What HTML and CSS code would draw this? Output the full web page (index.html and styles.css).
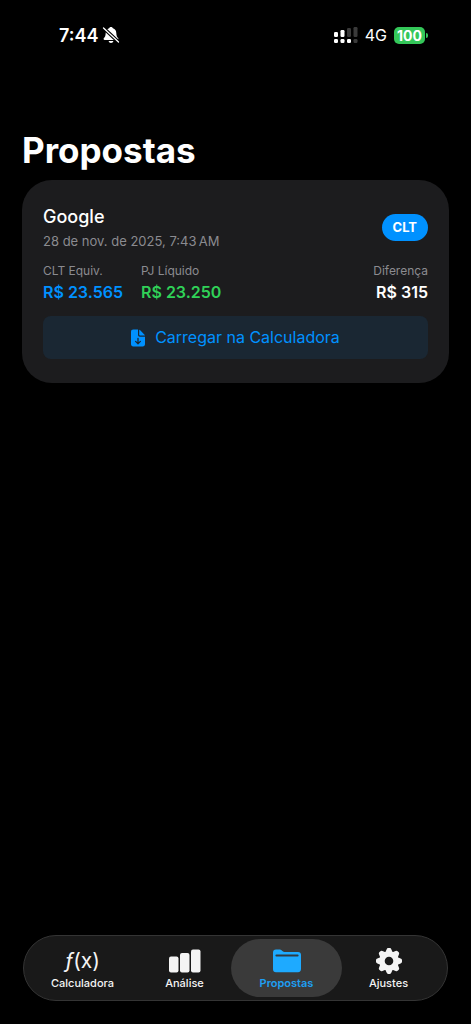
FILE: index.html
```html
<!DOCTYPE html>
<html lang="pt-BR">
<head>
<meta charset="utf-8">
<meta name="viewport" content="width=device-width, initial-scale=1">
<title>Propostas</title>
<link rel="stylesheet" href="styles.css">
</head>
<body>
<header class="status">
  <div class="status-time">
    <span>7:44</span>
    <svg class="bell" viewBox="0 0 18 18" width="18" height="18" aria-hidden="true">
      <path fill="#fff" d="M9 1c1 0 1.700.6 1.900 1.300 2.200.7 3.300 2.300 3.400 4.600.1 2.900.7 4 1.800 5.100.7.800.3 2-.8 2H2.700c-1.100 0-1.500-1.200-.8-2C3 10.900 3.600 9.800 3.700 6.900c.1-2.300 1.200-3.900 3.400-4.600C7.300 1.600 8 1 9 1zM6.600 15h4.800c-.2 1.300-1.200 2-2.400 2s-2.200-.7-2.400-2z"/>
      <path stroke="#000" stroke-width="3.600" d="M1.500 2l15 14"/>
      <path stroke="#fff" stroke-width="1.300" stroke-linecap="round" d="M1.500 2l15 14"/>
    </svg>
  </div>
  <div class="status-right">
    <svg viewBox="0 0 24 17" width="24" height="17" aria-hidden="true">
      <g fill="#fff">
        <rect x="0" y="5" width="4" height="5" rx="1.200"/><rect x="6.500" y="3" width="4" height="7" rx="1.200"/>
        <rect x="0" y="12" width="4" height="4" rx="1.200"/><rect x="6.500" y="12" width="4" height="4" rx="1.200"/><rect x="13" y="12" width="4" height="4" rx="1.200"/>
      </g>
      <g fill="#3a3a3a"><rect x="13" y="1" width="4" height="9" rx="1.200"/><rect x="19.500" y="0" width="4" height="10" rx="1.200"/><rect x="19.500" y="12" width="4" height="4" rx="1.200"/></g>
    </svg>
    <span class="network">4G</span>
    <span class="battery"><span class="battery-level">100</span><span class="battery-tip"></span></span>
  </div>
</header>
<main class="content">
  <h1 class="title">Propostas</h1>
  <article class="card">
    <div class="card-head">
      <div>
        <h2 class="name">Google</h2>
        <p class="date">28 de nov. de 2025, 7:43&#8239;AM</p>
      </div>
      <span class="badge">CLT</span>
    </div>
    <dl class="values">
      <div><dt>CLT Equiv.</dt><dd class="blue">R$ 23.565</dd></div>
      <div><dt>PJ Líquido</dt><dd class="green">R$ 23.250</dd></div>
      <div class="difference"><dt>Diferença</dt><dd>R$ 315</dd></div>
    </dl>
    <button class="load" type="button">
      <svg viewBox="0 0 14 18" width="14" height="18" aria-hidden="true">
        <path fill="currentColor" d="M2.400.5H7v5.300C7 7 7.700 7.700 8.900 7.700H14v7.400c0 1.600-.8 2.400-2.400 2.400H2.400C.8 17.500 0 16.700 0 15.100V2.900C0 1.300.8.500 2.400.5zM8.200.7c.4.1.7.3 1 .6l4.100 4.200c.3.3.5.600.6 1H9c-.5 0-.8-.3-.8-.8z"/>
        <path fill="none" stroke="#1a2733" stroke-width="1.300" stroke-linecap="round" stroke-linejoin="round" d="M7 9.300v5.200M4.600 12.400L7 14.700l2.400-2.300"/>
      </svg>
      Carregar na Calculadora
    </button>
  </article>
</main>
<nav class="tabs">
  <a class="tab" href="#calculadora">
    <span class="tab-icon function" aria-hidden="true"><i>ƒ</i>(x)</span>
    Calculadora
  </a>
  <a class="tab" href="#analise">
    <span class="tab-icon"><svg viewBox="0 0 32 24" width="32" height="24" fill="currentColor" aria-hidden="true">
      <rect x="0" y="7.500" width="9.500" height="16" rx="2"/><rect x="11" y="4" width="9.500" height="19.500" rx="2"/><rect x="22" y=".5" width="9.500" height="23" rx="2"/>
    </svg></span>
    Análise
  </a>
  <a class="tab active" href="#propostas" aria-current="page">
    <span class="tab-icon"><svg viewBox="0 0 28 24" width="28" height="24" aria-hidden="true">
      <path fill="#1eaaff" d="M0 3.500C0 1.500 1 .5 3 .5h3.200c1.200 0 1.800.2 2.600.9l.9.800c.6.500 1 .7 1.900.7H25c2 0 3 1 3 3v14.200c0 2-1 3.100-3 3.100H3c-2 0-3-1-3-3z"/>
      <rect x="2.400" y="5.600" width="23.200" height="2" rx="1" fill="#303a42"/>
    </svg></span>
    Propostas
  </a>
  <a class="tab" href="#ajustes">
    <span class="tab-icon"><svg viewBox="-13 -13 26 26" width="26" height="26" fill="currentColor" aria-hidden="true">
      <defs><path id="tooth" d="M-4.200-7.500L-2.400-11.600Q-2-13-.8-13H.8Q2-13 2.400-11.600L4.200-7.500z"/></defs>
      <use href="#tooth"/><use href="#tooth" transform="rotate(45)"/><use href="#tooth" transform="rotate(90)"/><use href="#tooth" transform="rotate(135)"/>
      <use href="#tooth" transform="rotate(180)"/><use href="#tooth" transform="rotate(225)"/><use href="#tooth" transform="rotate(270)"/><use href="#tooth" transform="rotate(315)"/>
      <circle r="7" fill="none" stroke="currentColor" stroke-width="5.400"/>
    </svg></span>
    Ajustes
  </a>
</nav>
</body>
</html>
```
FILE: styles.css
```css
* { box-sizing: border-box; }
body {
  margin: 0;
  min-height: 100vh;
  display: flex;
  flex-direction: column;
  background: #000;
  color: #fff;
  font-family: Inter, "Liberation Sans", sans-serif;
}
h1, h2, p, dl, dd { margin: 0; }
.status {
  display: flex;
  justify-content: space-between;
  align-items: center;
  height: 70px;
  padding: 0 43px 0 59px;
}
.status-time, .status-right { display: flex; align-items: center; }
.status-time { gap: 4px; font-size: 18px; font-weight: 600; }
.status-right { gap: 7px; }
.network { font-size: 16px; font-weight: 400; }
.battery { display: flex; align-items: center; gap: 1px; }
.battery-level {
  width: 31px;
  border-radius: 5px;
  background: #34c759;
  font-size: 14px;
  line-height: 17px;
  font-weight: 700;
  text-align: center;
}
.battery-tip { width: 2px; height: 5px; border-radius: 0 2px 2px 0; background: #34c759; }
.content { flex: 1; padding: 58px 22px 24px; }
.title { font-size: 35px; line-height: 44px; font-weight: 700; margin-bottom: 8px; }
.card {
  padding: 24px 21px;
  border-radius: 30px;
  background: #1c1c1e;
}
.card-head { display: flex; justify-content: space-between; align-items: center; }
.name { font-size: 18px; line-height: 26px; font-weight: 500; margin-bottom: 2px; }
.date { font-size: 13px; line-height: 18px; color: #8b8b90; }
.badge {
  padding: 0 11px;
  border-radius: 14px;
  background: #0091ff;
  font-size: 13px;
  line-height: 27px;
  font-weight: 700;
}
.values { display: flex; gap: 18px; margin: 12px 0; }
.difference { margin-left: auto; text-align: right; }
dt { font-size: 12px; line-height: 18px; color: #8b8b90; }
dd { font-size: 16px; line-height: 24px; font-weight: 600; }
.blue { color: #0091ff; }
.green { color: #30d158; }
.load {
  display: flex;
  justify-content: center;
  align-items: center;
  gap: 10px;
  width: 100%;
  padding: 0;
  border: 0;
  border-radius: 8px;
  background: #1a2733;
  color: #0091ff;
  font: 400 16px/43px Inter, "Liberation Sans", sans-serif;
}
.tabs {
  display: flex;
  margin: 0 23px 23px;
  padding: 3px;
  border: 1px solid #343434;
  border-radius: 33px;
  background: #191919;
}
.tab {
  flex: 1;
  display: flex;
  flex-direction: column;
  align-items: center;
  padding: 8px 0 6px;
  border-radius: 29px;
  color: #f4f4f4;
  font-size: 11px;
  line-height: 16px;
  font-weight: 500;
  text-decoration: none;
}
.tab + .tab { margin-left: -9px; }
.active { background: #3a3a3a; color: #1e9ff2; font-weight: 600; }
.tab-icon { display: flex; align-items: center; justify-content: center; height: 28px; }
.function { font-size: 21px; line-height: 24px; font-weight: 400; }
```
